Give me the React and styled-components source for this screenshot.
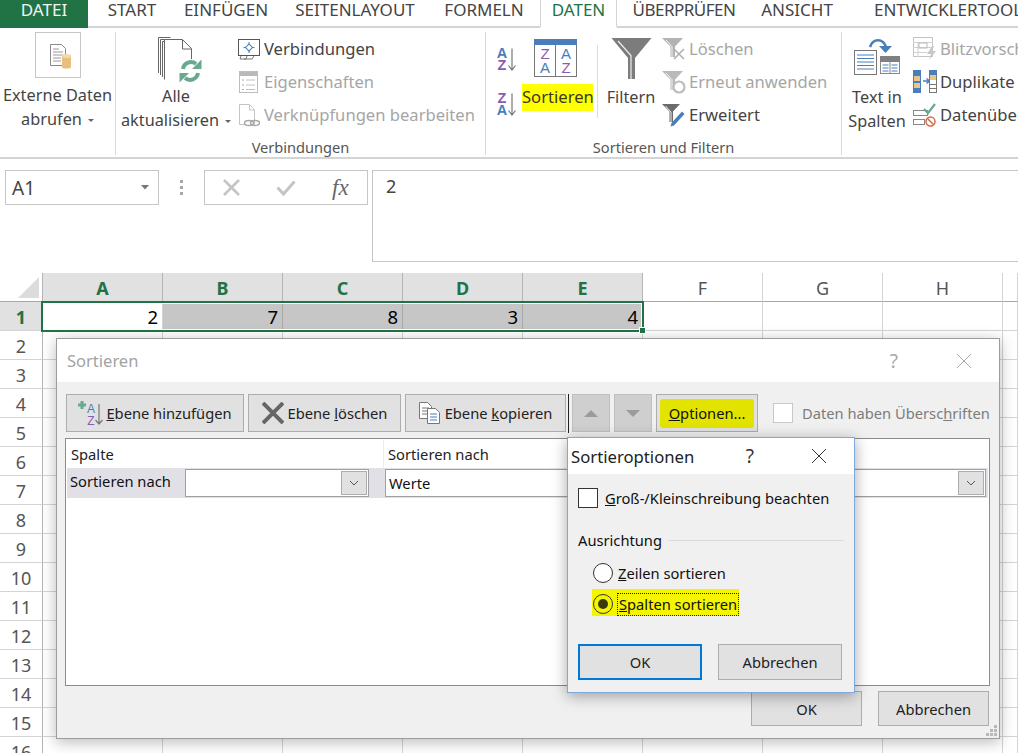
import React from "react";
import styled, { createGlobalStyle } from "styled-components";

const Global = createGlobalStyle`
  html, body { margin: 0; padding: 0; background: #fff; }
  body { font-family: "Noto Sans", "Open Sans", sans-serif; color: #444; }
  * { box-sizing: border-box; }
`;

const Page = styled.div`
  position: relative;
  width: 1018px;
  height: 753px;
  overflow: hidden;
  background: #fff;
`;

/* ---------- tabs ---------- */
const TabBar = styled.div`
  display: flex;
  height: 28px;
  border-bottom: 2px solid #d4d4d4;
  white-space: nowrap;
`;
const FileTab = styled.div`
  flex: none;
  width: 88px;
  height: 28px;
  background: #217346;
  color: #f0f5f2;
  font-size: 17px;
  line-height: 20px;
  text-align: center;
`;
const Tab = styled.div`
  flex: none;
  width: ${(p) => p.$w}px;
  height: 28px;
  font-size: 17px;
  line-height: 20px;
  text-align: center;
  color: #444;
  letter-spacing: ${(p) => p.$ls || 0}px;
`;
const ActiveTab = styled(Tab)`
  margin-left: 6px;
  color: #217346;
  background: #fff;
  border: 1px solid #d4d4d4;
  border-top: none;
  border-bottom: 2px solid #fff;
`;
const LastTab = styled(Tab)`
  padding-left: 31px;
  text-align: left;
`;

/* ---------- ribbon ---------- */
const Ribbon = styled.div`
  display: flex;
  height: 131px;
  padding-top: 4px;
  border-bottom: 2px solid #d4d4d4;
  overflow: hidden;
`;
const Group = styled.div`
  flex: none;
  width: ${(p) => p.$w}px;
  height: 123px;
  display: flex;
  flex-direction: column;
  border-right: ${(p) => (p.$last ? "none" : "1px solid #d9d9d9")};
`;
const GroupBody = styled.div`
  height: 106px;
  display: flex;
  align-items: flex-start;
  white-space: nowrap;
`;
const GroupLabel = styled.div`
  height: 17px;
  font-size: 14.6px;
  line-height: 19px;
  text-align: center;
  color: #555;
  white-space: nowrap;
`;
const BigButton = styled.div`
  flex: none;
  width: ${(p) => p.$w}px;
  display: flex;
  flex-direction: column;
  align-items: center;
  font-size: 16.3px;
  line-height: 24px;
  color: #444;
  margin-left: ${(p) => p.$ml || 0}px;
`;
const BigIcon = styled.div`
  height: ${(p) => p.$h || 53}px;
  margin-top: ${(p) => p.$mt || 0}px;
  margin-left: ${(p) => p.$ml || 0}px;
  display: flex;
  align-items: flex-end;
`;
const Caption = styled.div`
  margin-top: ${(p) => p.$mt || 0}px;
`;
const Caret = styled.span`
  display: inline-block;
  width: 0;
  height: 0;
  margin-left: 6px;
  vertical-align: 3px;
  border-left: 3.5px solid transparent;
  border-right: 3.5px solid transparent;
  border-top: 3.5px solid #666;
`;
const SmallList = styled.div`
  display: flex;
  flex-direction: column;
  margin-left: ${(p) => p.$ml || 0}px;
`;
const SmallRow = styled.div`
  height: 33px;
  display: flex;
  align-items: center;
  gap: ${(p) => p.$gap ?? 4}px;
  font-size: 16.6px;
  color: ${(p) => (p.$off ? "#a6a6a6" : "#444")};
`;
const SmallIcon = styled.div`
  width: ${(p) => p.$w || 22}px;
  height: 26px;
  display: flex;
  align-items: center;
  justify-content: center;
  flex: none;
`;
const SortColumn = styled.div`
  display: flex;
  flex-direction: column;
  gap: 19px;
  margin: 15px 0 0 10px;
  width: 26px;
`;
const SortBlock = styled.div`
  width: 71px;
  display: flex;
  flex-direction: column;
  align-items: center;
  padding-top: 7px;
`;
const SortPicture = styled.div`
  margin-right: 4px;
`;
const YellowLabel = styled.div`
  margin-top: 7px;
  width: 71px;
  height: 27px;
  background: #ffff00;
  color: #3a3a22;
  font-size: 16.6px;
  line-height: 25px;
  text-align: center;
`;
const VDivider = styled.div`
  width: 1px;
  height: 73px;
  margin: 13px 0 0 4px;
  background: #dcdcdc;
`;

/* ---------- formula bar ---------- */
const FormulaBar = styled.div`
  height: 114px;
  display: flex;
  align-items: flex-start;
  padding: 11px 0 0 5px;
`;
const NameBox = styled.div`
  width: 154px;
  height: 35px;
  border: 1px solid #c6c6c6;
  display: flex;
  align-items: center;
  justify-content: space-between;
  padding: 0 9px 0 6px;
  font-size: 19px;
  color: #444;
`;
const GripDots = styled.div`
  width: 45px;
  height: 35px;
  display: flex;
  flex-direction: column;
  align-items: center;
  justify-content: center;
  gap: 3px;
  i { width: 3px; height: 3px; background: #a8a8a8; display: block; }
`;
const FxBox = styled.div`
  width: 164px;
  height: 35px;
  border: 1px solid #c6c6c6;
  display: flex;
  align-items: center;
  padding-left: 18px;
  gap: 36px;
`;
const FxText = styled.span`
  font-family: "Liberation Serif", serif;
  font-style: italic;
  font-size: 23px;
  color: #666;
`;
const FormulaInput = styled.div`
  flex: 1;
  height: 92px;
  margin-left: 4px;
  margin-right: -2px;
  border: 1px solid #c6c6c6;
  border-right: none;
  padding: 3px 0 0 13px;
  font-size: 18px;
  color: #444;
`;

/* ---------- sheet ---------- */
const Sheet = styled.div`
  position: relative;
  display: grid;
  grid-template-columns: 43px repeat(8, 120px) 1fr;
  grid-auto-rows: 29px;
`;
const Corner = styled.div`
  border-right: 1px solid #b5b5b5;
  border-bottom: 1px solid #a8a8a8;
  display: flex;
  align-items: flex-end;
  justify-content: flex-end;
  padding: 0 3px 3px 0;
`;
const ColHead = styled.div`
  background: ${(p) => (p.$on ? "#e1e1e1" : "#fff")};
  border-right: 1px solid ${(p) => (p.$on ? "#b5b5b5" : "#d4d4d4")};
  border-bottom: 1px solid #a8a8a8;
  color: ${(p) => (p.$on ? "#217346" : "#555")};
  font-weight: ${(p) => (p.$on ? 700 : 400)};
  font-size: 18px;
  line-height: 31px;
  text-align: center;
`;
const RowHead = styled.div`
  background: ${(p) => (p.$on ? "#e1e1e1" : "#fff")};
  border-right: 1px solid #b5b5b5;
  border-bottom: 1px solid #d4d4d4;
  color: ${(p) => (p.$on ? "#217346" : "#555")};
  font-weight: ${(p) => (p.$on ? 700 : 400)};
  font-size: 18px;
  line-height: 30px;
  text-align: center;
`;
const Cell = styled.div`
  background: ${(p) => (p.$sel ? "#c6c6c6" : "#fff")};
  border-right: 1px solid ${(p) => (p.$sel ? "#a9a9a9" : "#d4d4d4")};
  border-bottom: 1px solid #d4d4d4;
  color: #000;
  font-size: 18.5px;
  line-height: 29px;
  text-align: right;
  padding-right: 4px;
`;
const Selection = styled.div`
  position: absolute;
  left: 41px;
  top: 28px;
  width: 603px;
  height: 31px;
  border: 2px solid #217346;
  box-shadow: inset 0 0 0 1px #fff;
  pointer-events: none;
`;
const FillHandle = styled.div`
  position: absolute;
  right: -4px;
  bottom: -4px;
  width: 7px;
  height: 7px;
  background: #217346;
  border: 1px solid #fff;
`;

/* ---------- dialogs ---------- */
const Window = styled.div`
  position: absolute;
  left: 56px;
  top: 338px;
  width: 944px;
  height: 401px;
  background: #f0f0f0;
  border: 1px solid #9c9c9c;
  box-shadow: 0 3px 14px rgba(0, 0, 0, 0.28);
  display: flex;
  flex-direction: column;
  color: #222;
`;
const TitleBar = styled.div`
  height: 43px;
  flex: none;
  background: #fff;
  display: flex;
  align-items: center;
  padding: 0 27px 0 10px;
  font-size: 16.5px;
  color: #a3a3a3;
`;
const Spacer = styled.div`
  flex: 1;
`;
const HelpMark = styled.span`
  font-size: 19px;
  color: #a8a8a8;
  margin-right: 58px;
`;
const Toolbar = styled.div`
  display: flex;
  align-items: center;
  height: 38px;
  margin: 12px 0 0 9px;
`;
const ToolButton = styled.div`
  flex: none;
  width: ${(p) => p.$w}px;
  margin-right: ${(p) => p.$mr ?? 4}px;
  height: 38px;
  background: #e1e1e1;
  border: 1px solid #adadad;
  display: flex;
  align-items: center;
  justify-content: center;
  gap: ${(p) => p.$gap ?? 4}px;
  font-size: 14.7px;
  color: #222;
  white-space: nowrap;
`;
const ArrowButton = styled(ToolButton)`
  background: #cfcfcf;
  border-color: #c0c0c0;
`;
const ToolRule = styled.div`
  width: 1px;
  height: 39px;
  background: #222;
  margin-right: 3px;
`;
const OptionMark = styled.span`
  display: block;
  width: 94px;
  height: 29px;
  line-height: 28px;
  background: #e3e300;
  border-radius: 3px;
  text-align: center;
  color: #111;
  font-size: 14.7px;
`;
const Tri = styled.span`
  width: 0;
  height: 0;
  border-left: 7px solid transparent;
  border-right: 7px solid transparent;
  ${(p) => (p.$down ? "border-top: 7px solid #9b9b9b;" : "border-bottom: 7px solid #9b9b9b;")}
`;
const CheckBox = styled.span`
  flex: none;
  display: block;
  width: 20px;
  height: 20px;
  background: #fff;
  border: 1px solid ${(p) => p.$c || "#333"};
`;
const HeaderCheck = styled.div`
  display: flex;
  align-items: center;
  gap: 9px;
  margin-left: 15px;
  font-size: 14.7px;
  color: #7c7c7c;
  white-space: nowrap;
`;
const Table = styled.div`
  width: 925px;
  height: 248px;
  margin: 6px 0 0 8px;
  flex: none;
  background: #fff;
  border: 1px solid #8c8c8c;
  padding: 1px 1px 0;
`;
const TableHead = styled.div`
  display: grid;
  grid-template-columns: 316px 1fr;
  height: 28px;
  font-size: 14.7px;
  line-height: 29px;
  color: #222;
`;
const HeadCell = styled.div`
  padding-left: 4px;
  & + & { border-left: 1px solid #ececec; }
`;
const TableRow = styled.div`
  display: flex;
  align-items: center;
  height: 30px;
  background: #e0e0e6;
  font-size: 14.7px;
  color: #111;
`;
const RowLabel = styled.div`
  width: 118px;
  flex: none;
  padding: 0 0 5px 3px;
  white-space: nowrap;
`;
const Combo = styled.div`
  flex: none;
  width: ${(p) => p.$w}px;
  margin-left: ${(p) => p.$ml || 0}px;
  height: 28px;
  background: #fff;
  border: 1px solid #a0a0a0;
  display: flex;
  align-items: center;
  justify-content: space-between;
  padding: 0 1px 0 3px;
`;
const ComboButton = styled.div`
  width: 26px;
  height: 24px;
  background: #e1e1e1;
  border: 1px solid #adadad;
  display: flex;
  align-items: center;
  justify-content: center;
`;
const Footer = styled.div`
  display: flex;
  justify-content: flex-end;
  gap: 16px;
  margin: 5px 10px 0 0;
  position: relative;
`;
const FootButton = styled.div`
  width: ${(p) => p.$w || 111}px;
  height: 35px;
  background: #e1e1e1;
  border: 1px solid #adadad;
  font-size: 14.7px;
  line-height: 34px;
  text-align: center;
  color: #222;
`;
const Grip = styled.div`
  position: absolute;
  right: -8px;
  bottom: -10px;
  svg { display: block; }
`;

const Options = styled.div`
  position: absolute;
  left: 567px;
  top: 437px;
  width: 288px;
  height: 256px;
  background: #f0f0f0;
  border: 1px solid #7fa9dd;
  box-shadow: 0 3px 14px rgba(0, 0, 0, 0.35);
  display: flex;
  flex-direction: column;
  color: #111;
`;
const OptTitle = styled.div`
  height: 36px;
  flex: none;
  background: #fff;
  display: flex;
  align-items: center;
  padding: 0 27px 0 3px;
  font-size: 16.7px;
  color: #222;
`;
const OptHelp = styled.span`
  font-size: 19px;
  color: #333;
  margin-right: 57px;
`;
const CheckLine = styled.div`
  display: flex;
  align-items: center;
  gap: 7px;
  margin: 14px 0 0 10px;
  font-size: 14.7px;
  white-space: nowrap;
`;
const LegendLine = styled.div`
  display: flex;
  align-items: center;
  gap: 6px;
  margin: 22px 10px 0 10px;
  font-size: 14.7px;
  &::after { content: ""; flex: 1; height: 1px; background: #d9d9d9; }
`;
const RadioLine = styled.div`
  display: flex;
  align-items: center;
  gap: 5px;
  width: ${(p) => (p.$mark ? "147px" : "auto")};
  height: 27px;
  margin: ${(p) => p.$m};
  padding: ${(p) => (p.$mark ? "3px" : "0")} 0 0 1px;
  font-size: 14.7px;
  white-space: nowrap;
  background: ${(p) => (p.$mark ? "#f5f500" : "transparent")};
`;
const Radio = styled.span`
  flex: none;
  position: relative;
  display: block;
  width: 20px;
  height: 20px;
  border-radius: 50%;
  background: ${(p) => (p.$on ? "transparent" : "#fff")};
  border: 1px solid #333;
  &::after {
    content: "";
    display: ${(p) => (p.$on ? "block" : "none")};
    position: absolute;
    left: 4px;
    top: 4px;
    width: 10px;
    height: 10px;
    border-radius: 50%;
    background: #3a3a10;
  }
`;
const FocusText = styled.span`
  outline: 1px dotted #222;
  outline-offset: 0;
  line-height: 21px;
  padding: 0 1px;
`;
const OptButtons = styled.div`
  display: flex;
  gap: 16px;
  margin: 28px 0 0 10px;
`;
const OptButton = styled.div`
  width: 124px;
  height: 36px;
  background: #e1e1e1;
  border: ${(p) => (p.$def ? "2px solid #0078d7" : "1px solid #adadad")};
  font-size: 14.7px;
  line-height: ${(p) => (p.$def ? 32 : 34)}px;
  text-align: center;
  color: #222;
`;

/* ---------- icons ---------- */
const Svg = ({ w, h, children }) => (
  <svg width={w} height={h} viewBox={`0 0 ${w} ${h}`} style={{ display: "block", flex: "none" }}>
    {children}
  </svg>
);
const BLUE = "#4a7ebb";
const PURPLE = "#8a5bb0";
const GREEN = "#6aa890";

const ExtDataIcon = () => (
  <Svg w={46} h={46}>
    <rect x="0.5" y="0.5" width="45" height="45" fill="#fff" stroke="#c6c6c6" />
    <path d="M15.5 12.5h11l4 4v17h-15z" fill="#fff" stroke="#8a8a8a" />
    <path d="M18 17h6M18 20h10M18 23h10M18 26h8M18 29h8" stroke="#9a9a9a" />
    <rect x="27" y="24" width="9" height="11" fill="#e8bf7c" />
    <ellipse cx="31.5" cy="24" rx="4.5" ry="2" fill="#f2d9a8" />
    <ellipse cx="31.5" cy="35" rx="4.5" ry="1.6" fill="#e8bf7c" />
  </Svg>
);
const RefreshIcon = () => (
  <Svg w={44} h={46}>
    <path d="M0.5 36V0.5h12M2.5 38V2.5h12M4.5 40V4.5h14" fill="none" stroke="#666" />
    <path d="M6.5 42.5V2.5h18l9 9v14" fill="#fff" stroke="#666" />
    <path d="M24.5 3v9h9" fill="none" stroke="#666" />
    <circle cx="32.5" cy="34" r="12" fill="#fff" />
    <path d="M25 32a8 8 0 0 1 13-5" fill="none" stroke={GREEN} strokeWidth="4" />
    <path d="M34 32h9.500v-9.500z" fill={GREEN} />
    <path d="M40 36a8 8 0 0 1-13 5" fill="none" stroke={GREEN} strokeWidth="4" />
    <path d="M31 36h-9.500v9.500z" fill={GREEN} />
  </Svg>
);
const ConnIcon = () => (
  <Svg w={22} h={22}>
    <rect x="0.5" y="1.5" width="21" height="16" fill="#fff" stroke="#555" />
    <path d="M3 18l-1 3h6l1-3M6 21h8l2-3" fill="none" stroke="#777" />
    <path d="M11 4v11M5.5 9.5h11" stroke={BLUE} />
    <rect x="8.5" y="7" width="5" height="5" fill="#fff" stroke={BLUE} transform="rotate(45 11 9.500)" />
  </Svg>
);
const PropsIcon = () => (
  <Svg w={20} h={24}>
    <rect x="0.5" y="1.5" width="18" height="21" fill="#fff" stroke="#bdbdbd" />
    <rect x="1" y="2" width="17" height="4" fill="#b9b9b9" />
    <path d="M7 10h9M7 15h9M7 19.500h9" stroke="#c0c0c0" />
    <path d="M3 10h2M3 15h2M3 19.500h2" stroke="#aaa" />
  </Svg>
);
const LinksIcon = () => (
  <Svg w={22} h={24}>
    <path d="M1.5 1.5h10l5 5v15h-15z" fill="#fff" stroke="#c4c4c4" />
    <path d="M11.5 2v5h5" fill="none" stroke="#c4c4c4" />
    <ellipse cx="11" cy="20" rx="4.500" ry="2.500" fill="#fff" stroke="#aaa" strokeWidth="1.500" />
    <ellipse cx="17" cy="20" rx="4.500" ry="2.500" fill="none" stroke="#aaa" strokeWidth="1.500" />
  </Svg>
);
const Letter = styled.text`
  font-family: "Liberation Sans", sans-serif;
  font-weight: ${(p) => p.$wt || 700};
  font-size: ${(p) => p.$s || 14.5}px;
  text-anchor: middle;
`;
const SortSmall = ({ up }) => (
  <Svg w={22} h={26}>
    <Letter x="6" y="11" fill={up ? BLUE : PURPLE}>{up ? "A" : "Z"}</Letter>
    <Letter x="6" y="23" fill={up ? PURPLE : BLUE}>{up ? "Z" : "A"}</Letter>
    <path d="M16 1.500v21M12.500 18.500l3.500 4.500 3.500-4.500" fill="none" stroke="#777" strokeWidth="1.200" />
  </Svg>
);
const SortBig = () => (
  <Svg w={43} h={38}>
    <rect x="0.5" y="0.5" width="42" height="37" fill="#fff" stroke="#777" />
    <rect x="0" y="0" width="43" height="6" fill={BLUE} />
    <path d="M21.500 6v32" stroke="#777" />
    <Letter x="11" y="20" $s={15} $wt={400} fill={PURPLE}>Z</Letter>
    <Letter x="11" y="34" $s={15} $wt={400} fill={BLUE}>A</Letter>
    <Letter x="32" y="20" $s={15} $wt={400} fill={BLUE}>A</Letter>
    <Letter x="32" y="34" $s={15} $wt={400} fill={PURPLE}>Z</Letter>
  </Svg>
);
const FunnelBig = () => (
  <Svg w={41} h={41}>
    <path d="M0.5 0h40L24 20v21h-7V20z" fill="#7c7c7c" />
    <path d="M7 3L20 17.500V41" fill="none" stroke="#eee" strokeWidth="1.200" />
  </Svg>
);
const Funnel = ({ c }) => (
  <>
    <path d="M0 1h21l-8 8.500V20H8.500V9.500z" fill={c} />
    <path d="M4 3l6 6.500V20" fill="none" stroke="#f2f2f2" />
  </>
);
const ClearIcon = () => (
  <Svg w={24} h={24}>
    <Funnel c="#b3b3b3" />
    <path d="M12 12l10 10M22 12L12 22" stroke="#b0b0b0" strokeWidth="1.600" />
  </Svg>
);
const ReapplyIcon = () => (
  <Svg w={24} h={24}>
    <Funnel c="#b9b9b9" />
    <circle cx="17" cy="17" r="5.500" fill="#fff" stroke="#bdbdbd" strokeWidth="2.200" />
  </Svg>
);
const AdvancedIcon = () => (
  <Svg w={24} h={24}>
    <path d="M0 1h18l-7 7.500V19H7.500V8.500z" fill="#6b6b6b" />
    <path d="M3.500 3l5.500 6V19" fill="none" stroke="#eee" />
    <path d="M8.500 23.500l1-3.500L20 8.500l2.500 2.500L12 22.500z" fill={BLUE} />
  </Svg>
);
const TextColsIcon = () => (
  <Svg w={46} h={38}>
    <rect x="0.5" y="12.5" width="22" height="24" fill="#fff" stroke="#777" />
    <path d="M3 17h17M3 20.500h17M3 24h17M3 27.500h17M3 31h17" stroke={BLUE} />
    <path d="M16 9C19 0 29 0 32 9" fill="none" stroke={BLUE} strokeWidth="2.600" />
    <path d="M25 8h13l-6.500 7z" fill={BLUE} />
    <rect x="26.5" y="18.5" width="19" height="17" fill="#fff" stroke="#888" />
    <rect x="26" y="18" width="20" height="6" fill="#808080" />
    <path d="M36 24v11" stroke="#888" />
    <path d="M28.500 27h6M28.500 30h6M28.500 33h6M37.500 27h6M37.500 30h6M37.500 33h6" stroke={BLUE} />
  </Svg>
);
const FlashIcon = () => (
  <Svg w={24} h={24}>
    <rect x="0.5" y="0.5" width="19" height="19" fill="#fff" stroke="#c4c4c4" />
    <path d="M0 5.500h20M0 10.500h20M0 15.500h14M5 6v14" stroke="#d0d0d0" />
    <rect x="6" y="6" width="8" height="5" fill="none" stroke="#bbb" />
    <path d="M19 9l-5 8h4l-2 6 7-9h-4l2-5z" fill="#c8c8c8" />
  </Svg>
);
const DupIcon = () => (
  <Svg w={24} h={24}>
    <rect x="0" y="0" width="8" height="23" fill={BLUE} />
    <rect x="1" y="6" width="6" height="5" fill="#e8c58a" />
    <rect x="1" y="13" width="6" height="5" fill="#e8c58a" />
    <path d="M10 11h6M13.500 8.500L16.500 11l-3 2.500" stroke={BLUE} fill="none" strokeWidth="1.500" />
    <rect x="16.5" y="0.5" width="7" height="22" fill="#fff" stroke="#777" />
    <rect x="16" y="0" width="8" height="5" fill={BLUE} />
    <rect x="17" y="5" width="6" height="5" fill="#e8c58a" />
    <path d="M17 14.500h6M17 18.500h6" stroke="#777" />
  </Svg>
);
const ValidIcon = () => (
  <Svg w={24} h={24}>
    <rect x="0.5" y="7.5" width="14" height="5" fill="#fff" stroke="#888" />
    <rect x="0.5" y="16.5" width="11" height="5" fill="#fff" stroke="#888" />
    <path d="M11 6l4 4 7-9" fill="none" stroke={GREEN} strokeWidth="2.200" />
    <circle cx="17.5" cy="18.5" r="4.500" fill="#fff" stroke="#d9694a" strokeWidth="1.500" />
    <path d="M14.500 15.500l6 6" stroke="#d9694a" strokeWidth="1.500" />
  </Svg>
);
const CrossLine = ({ s, c, sw }) => (
  <Svg w={s} h={s}>
    <path d={`M1 1L${s - 1} ${s - 1}M${s - 1} 1L1 ${s - 1}`} stroke={c} strokeWidth={sw} fill="none" />
  </Svg>
);
const TickIcon = () => (
  <Svg w={20} h={18}>
    <path d="M1.500 8.500L7.500 15 18.500 2.500" fill="none" stroke="#c4c4c4" strokeWidth="3" />
  </Svg>
);
const AddLevelIcon = () => (
  <Svg w={25} h={26}>
    <path d="M4 1v8M0 5h8" stroke={GREEN} strokeWidth="3" />
    <Letter x="13" y="13" $s={12} $wt={400} fill={BLUE}>A</Letter>
    <Letter x="13" y="25" $s={12} $wt={400} fill={PURPLE}>Z</Letter>
    <path d="M21 4v20M17.500 20l3.500 4 3.500-4" fill="none" stroke="#777" strokeWidth="1.200" />
  </Svg>
);
const CopyIcon = () => (
  <Svg w={22} h={22}>
    <path d="M0.500 0.500h8l4 4v12h-12z" fill="#fff" stroke="#777" />
    <path d="M3 6h7M3 9h7M3 12h7" stroke="#777" />
    <path d="M8.500 6.500h8l4 4v11h-12z" fill="#fff" stroke="#777" />
    <path d="M11 12h7M11 15h7M11 18h7" stroke={BLUE} />
  </Svg>
);
const Chevron = () => (
  <Svg w={10} h={6}>
    <path d="M1 1l4 4 4-4" fill="none" stroke="#555" />
  </Svg>
);
const CornerTri = () => (
  <Svg w={21} h={21}>
    <path d="M21 0v21H0z" fill="#dcdcdc" />
  </Svg>
);
const GripIcon = () => (
  <Svg w={11} h={11}>
    <path d="M8 0h3v3H8zM4 4h3v3H4zM8 4h3v3H8zM0 8h3v3H0zM4 8h3v3H4zM8 8h3v3H8z" fill="#b8b8b8" />
  </Svg>
);

const COLS = ["A", "B", "C", "D", "E", "F", "G", "H"];
const VALUES = { A: "2", B: "7", C: "8", D: "3", E: "4" };
const ROWS = Array.from({ length: 16 }, (_, i) => i + 1);

export default function App() {
  return (
    <Page>
      <Global />
      <TabBar>
        <FileTab>DATEI</FileTab>
        <Tab $w={88}>START</Tab>
        <Tab $w={100}>EINFÜGEN</Tab>
        <Tab $w={158}>SEITENLAYOUT</Tab>
        <Tab $w={100}>FORMELN</Tab>
        <ActiveTab $w={77}>DATEN</ActiveTab>
        <Tab $w={134} $ls={-0.5}>ÜBERPRÜFEN</Tab>
        <Tab $w={92}>ANSICHT</Tab>
        <LastTab $w={200}>ENTWICKLERTOOLS</LastTab>
      </TabBar>

      <Ribbon>
        <Group $w={116}>
          <GroupBody>
            <BigButton $w={115}>
              <BigIcon $h={46}><ExtDataIcon /></BigIcon>
              <Caption $mt={5}>Externe Daten</Caption>
              <Caption>abrufen<Caret /></Caption>
            </BigButton>
          </GroupBody>
        </Group>
        <Group $w={370}>
          <GroupBody>
            <BigButton $w={116} $ml={2}>
              <BigIcon $h={51} $ml={8}><RefreshIcon /></BigIcon>
              <Caption $mt={1}>Alle</Caption>
              <Caption>aktualisieren<Caret /></Caption>
            </BigButton>
            <SmallList $ml={4}>
              <SmallRow><SmallIcon><ConnIcon /></SmallIcon>Verbindungen</SmallRow>
              <SmallRow $off><SmallIcon><PropsIcon /></SmallIcon>Eigenschaften</SmallRow>
              <SmallRow $off><SmallIcon><LinksIcon /></SmallIcon>Verknüpfungen bearbeiten</SmallRow>
            </SmallList>
          </GroupBody>
          <GroupLabel>Verbindungen</GroupLabel>
        </Group>
        <Group $w={356}>
          <GroupBody>
            <SortColumn>
              <SortSmall up />
              <SortSmall />
            </SortColumn>
            <SortBlock>
              <SortPicture><SortBig /></SortPicture>
              <YellowLabel>Sortieren</YellowLabel>
            </SortBlock>
            <VDivider />
            <BigButton $w={66}>
              <BigIcon $h={41} $mt={6}><FunnelBig /></BigIcon>
              <Caption $mt={6}>Filtern</Caption>
            </BigButton>
            <SmallList $ml={-2}>
              <SmallRow $gap={3} $off><SmallIcon $w={24}><ClearIcon /></SmallIcon>Löschen</SmallRow>
              <SmallRow $gap={3} $off><SmallIcon $w={24}><ReapplyIcon /></SmallIcon>Erneut anwenden</SmallRow>
              <SmallRow $gap={3}><SmallIcon $w={24}><AdvancedIcon /></SmallIcon>Erweitert</SmallRow>
            </SmallList>
          </GroupBody>
          <GroupLabel>Sortieren und Filtern</GroupLabel>
        </Group>
        <Group $w={176} $last>
          <GroupBody>
            <BigButton $w={70}>
              <BigIcon $h={38} $mt={6}><TextColsIcon /></BigIcon>
              <Caption $mt={9}>Text in</Caption>
              <Caption>Spalten</Caption>
            </BigButton>
            <SmallList>
              <SmallRow $gap={3} $off><SmallIcon $w={25}><FlashIcon /></SmallIcon>Blitzvorschau</SmallRow>
              <SmallRow $gap={3}><SmallIcon $w={25}><DupIcon /></SmallIcon>Duplikate entfernen</SmallRow>
              <SmallRow $gap={3}><SmallIcon $w={25}><ValidIcon /></SmallIcon>Datenüberprüfung</SmallRow>
            </SmallList>
          </GroupBody>
        </Group>
      </Ribbon>

      <FormulaBar>
        <NameBox>
          A1
          <Svg w={8} h={5}><path d="M0 0h8L4 4.500z" fill="#777" /></Svg>
        </NameBox>
        <GripDots><i /><i /><i /></GripDots>
        <FxBox>
          <CrossLine s={17} c="#c4c4c4" sw={2.6} />
          <TickIcon />
          <FxText>fx</FxText>
        </FxBox>
        <FormulaInput>2</FormulaInput>
      </FormulaBar>

      <Sheet>
        <Corner><CornerTri /></Corner>
        {COLS.map((c) => (
          <ColHead key={c} $on={!!VALUES[c]}>{c}</ColHead>
        ))}
        <ColHead />
        {ROWS.map((r) => (
          <React.Fragment key={r}>
            <RowHead $on={r === 1}>{r}</RowHead>
            {COLS.map((c) => (
              <Cell key={c} $sel={r === 1 && VALUES[c] && c !== "A"}>
                {r === 1 ? VALUES[c] : ""}
              </Cell>
            ))}
            <Cell />
          </React.Fragment>
        ))}
        <Selection><FillHandle /></Selection>
      </Sheet>

      <Window>
        <TitleBar>
          Sortieren
          <Spacer />
          <HelpMark>?</HelpMark>
          <CrossLine s={16} c="#a8a8a8" sw={1} />
        </TitleBar>
        <Toolbar>
          <ToolButton $w={178} $gap={3}>
            <AddLevelIcon />
            <span><u>E</u>bene hinzufügen</span>
          </ToolButton>
          <ToolButton $w={153}>
            <CrossLine s={22} c="#666" sw={4} />
            <span>Ebene <u>l</u>öschen</span>
          </ToolButton>
          <ToolButton $w={161} $mr={2}>
            <CopyIcon />
            <span>Ebene <u>k</u>opieren</span>
          </ToolButton>
          <ToolRule />
          <ArrowButton $w={38}><Tri /></ArrowButton>
          <ArrowButton $w={38}><Tri $down /></ArrowButton>
          <ToolButton $w={102} $mr={0}>
            <OptionMark><u>O</u>ptionen...</OptionMark>
          </ToolButton>
          <HeaderCheck>
            <CheckBox $c="#c8c8c8" />
            <span>Daten haben Übersc<u>h</u>riften</span>
          </HeaderCheck>
        </Toolbar>
        <Table>
          <TableHead>
            <HeadCell>Spalte</HeadCell>
            <HeadCell>Sortieren nach</HeadCell>
          </TableHead>
          <TableRow>
            <RowLabel>Sortieren nach</RowLabel>
            <Combo $w={184}>
              <span />
              <ComboButton><Chevron /></ComboButton>
            </Combo>
            <Combo $w={270} $ml={16}>
              <span>Werte</span>
            </Combo>
            <Combo $w={300} $ml={31}>
              <span />
              <ComboButton><Chevron /></ComboButton>
            </Combo>
          </TableRow>
        </Table>
        <Footer>
          <FootButton>OK</FootButton>
          <FootButton>Abbrechen</FootButton>
          <Grip><GripIcon /></Grip>
        </Footer>
      </Window>

      <Options>
        <OptTitle>
          Sortieroptionen
          <Spacer />
          <OptHelp>?</OptHelp>
          <CrossLine s={16} c="#333" sw={1} />
        </OptTitle>
        <CheckLine>
          <CheckBox />
          <span><u>G</u>roß-/Kleinschreibung beachten</span>
        </CheckLine>
        <LegendLine>Ausrichtung</LegendLine>
        <RadioLine $m="9px 0 0 24px">
          <Radio />
          <span><u>Z</u>eilen sortieren</span>
        </RadioLine>
        <RadioLine $mark $m="3px 0 0 24px">
          <Radio $on />
          <FocusText><u>S</u>palten sortieren</FocusText>
        </RadioLine>
        <OptButtons>
          <OptButton $def>OK</OptButton>
          <OptButton>Abbrechen</OptButton>
        </OptButtons>
      </Options>
    </Page>
  );
}
